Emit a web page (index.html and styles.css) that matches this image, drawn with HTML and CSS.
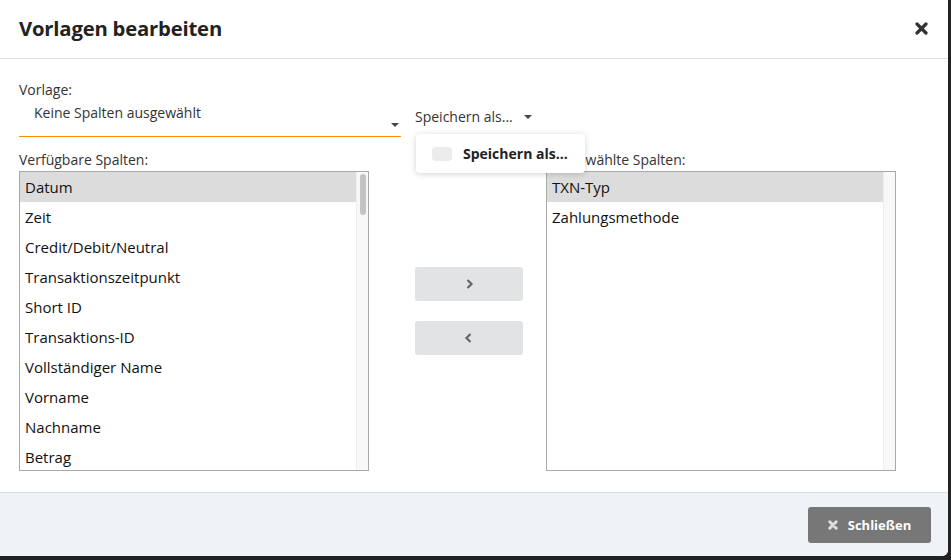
FILE: index.html
```html
<!DOCTYPE html>
<html lang="de">
<head>
  <meta charset="UTF-8" />
  <meta name="viewport" content="width=device-width, initial-scale=1.0"/>
  <title>Vorlagen bearbeiten</title>
  <link rel="stylesheet" href="styles.css">
</head>
<body>

  <div class="modal">
    <div class="modal-header">
      <h2>Vorlagen bearbeiten</h2>
      <span class="close-x">
        <svg width="13" height="13" viewBox="0 0 13 13"><path d="M2 2 L11 11 M11 2 L2 11" stroke="#333" stroke-width="3.2" stroke-linecap="round"/></svg>
      </span>
    </div>

    <div class="modal-body">
      <div class="top-row">
        <div class="template-group">
          <label>Vorlage:</label>
          <div class="select">
            <span>Keine Spalten ausgewählt</span>
            <span class="caret"></span>
          </div>
        </div>
        <div class="save-as">
          <div class="save-toggle">Speichern als... <span class="caret"></span></div>
          <div class="save-menu">
            <span class="check"></span>
            <strong>Speichern als...</strong>
          </div>
        </div>
      </div>

      <div class="columns">
        <div class="col">
          <label>Verfügbare Spalten:</label>
          <div class="listbox">
            <ul>
              <li class="active">Datum</li>
              <li>Zeit</li>
              <li>Credit/Debit/Neutral</li>
              <li>Transaktionszeitpunkt</li>
              <li>Short ID</li>
              <li>Transaktions-ID</li>
              <li>Vollständiger Name</li>
              <li>Vorname</li>
              <li>Nachname</li>
              <li>Betrag</li>
            </ul>
            <div class="scrollbar"><div class="thumb"></div></div>
          </div>
        </div>

        <div class="mover">
          <button class="move-btn">
            <svg width="10" height="12" viewBox="0 0 10 12"><path d="M3.5 2 L7.5 6 L3.5 10" fill="none" stroke="#666" stroke-width="2.2"/></svg>
          </button>
          <button class="move-btn">
            <svg width="10" height="12" viewBox="0 0 10 12"><path d="M6.5 2 L2.5 6 L6.5 10" fill="none" stroke="#666" stroke-width="2.2"/></svg>
          </button>
        </div>

        <div class="col">
          <label class="label-under">Ausgewählte Spalten:</label>
          <div class="listbox">
            <ul>
              <li class="active">TXN-Typ</li>
              <li>Zahlungsmethode</li>
            </ul>
            <div class="scrollbar"></div>
          </div>
        </div>
      </div>
    </div>

    <div class="modal-footer">
      <button class="btn-close">
        <svg width="10" height="10" viewBox="0 0 10 10"><path d="M1.8 1.8 L8.2 8.2 M8.2 1.8 L1.8 8.2" stroke="#ddd" stroke-width="3" stroke-linecap="round"/></svg>
        Schließen
      </button>
    </div>
  </div>

</body>
</html>
```

FILE: styles.css
```css
* {
  box-sizing: border-box;
}
body {
  margin: 0;
  background: #222;
  font-family: "Open Sans", Arial, sans-serif;
  color: #333;
}
.modal {
  width: 948px;
  height: 556px;
  background: #fff;
  border-radius: 0 0 6px 0;
  overflow: hidden;
  display: flex;
  flex-direction: column;
}
.modal-header {
  height: 59px;
  padding: 0 20px 3px 19px;
  border-bottom: 1px solid #e0e0e0;
  display: flex;
  align-items: center;
  justify-content: space-between;
}
.modal-header h2 {
  margin: 0;
  font-size: 20.3px;
  font-weight: 700;
  color: #222;
  letter-spacing: -0.2px;
}
.close-x {
  display: flex;
  margin-top: 2px;
}
.modal-body {
  flex: 1;
  padding: 21px 19px 0;
}
label {
  display: block;
  font-size: 14px;
  line-height: 20px;
  color: #333;
}
.top-row {
  display: flex;
  height: 70px;
}
.template-group {
  width: 382px;
}
.select {
  height: 37px;
  border-bottom: 1px solid #ff8a00;
  padding: 3px 0 0 15px;
  font-size: 14px;
  position: relative;
}
.select .caret {
  position: absolute;
  right: 2px;
  top: 23px;
}
.caret {
  display: inline-block;
  width: 0;
  height: 0;
  border-left: 4px solid transparent;
  border-right: 4px solid transparent;
  border-top: 4px solid #444;
  vertical-align: middle;
}
.save-as {
  margin-left: 14px;
  position: relative;
  padding-top: 27px;
}
.save-toggle {
  font-size: 14px;
  line-height: 20px;
}
.save-toggle .caret {
  margin-left: 8px;
  margin-top: -2px;
}
/* open dropdown covers part of the right column label */
.save-menu {
  position: absolute;
  left: 1px;
  top: 54px;
  width: 169px;
  height: 39px;
  background: #fff;
  border-radius: 4px;
  box-shadow: 0 1px 6px rgba(0, 0, 0, 0.18);
  display: flex;
  align-items: center;
  padding-left: 16px;
  font-size: 14px;
  color: #222;
  z-index: 2;
}
.check {
  width: 20px;
  height: 14px;
  background: #ececec;
  border-radius: 4px;
  margin-right: 11px;
}
.columns {
  display: flex;
  align-items: flex-start;
}
.col {
  width: 350px;
}
.col label {
  margin-bottom: 1px;
}
.listbox {
  height: 300px;
  border: 1px solid #aaa;
  display: flex;
  background: #fff;
}
.listbox ul {
  list-style: none;
  margin: 0;
  padding: 0;
  flex: 1;
}
.listbox li {
  height: 30px;
  line-height: 30px;
  padding-left: 5px;
  font-size: 15px;
  color: #111;
}
.listbox li.active {
  background: #dcdcdc;
}
.scrollbar {
  width: 12px;
  background: #f8f8f8;
  border-left: 1px solid #eee;
  padding: 2px 2px 0 3px;
}
.thumb {
  height: 41px;
  background: #c4c4c4;
  border-radius: 3px;
}
.mover {
  width: 108px;
  margin: 117px 23px 0 46px;
  display: flex;
  flex-direction: column;
  gap: 20px;
}
.move-btn {
  height: 34px;
  border: none;
  border-radius: 3px;
  background: #e2e3e5;
  display: flex;
  align-items: center;
  justify-content: center;
  padding-left: 6px;
  cursor: pointer;
}
.modal-footer {
  height: 64px;
  border-top: 1px solid #dcdcdc;
  background: #eff2f7;
  display: flex;
  align-items: center;
  justify-content: flex-end;
  padding-right: 17px;
}
.btn-close {
  width: 123px;
  height: 36px;
  border: none;
  border-radius: 3px;
  background: #777;
  color: #fff;
  font-family: "Open Sans", Arial, sans-serif;
  font-size: 13px;
  font-weight: 700;
  display: flex;
  align-items: center;
  justify-content: center;
  gap: 10px;
  padding-left: 6px;
  cursor: pointer;
}
```
